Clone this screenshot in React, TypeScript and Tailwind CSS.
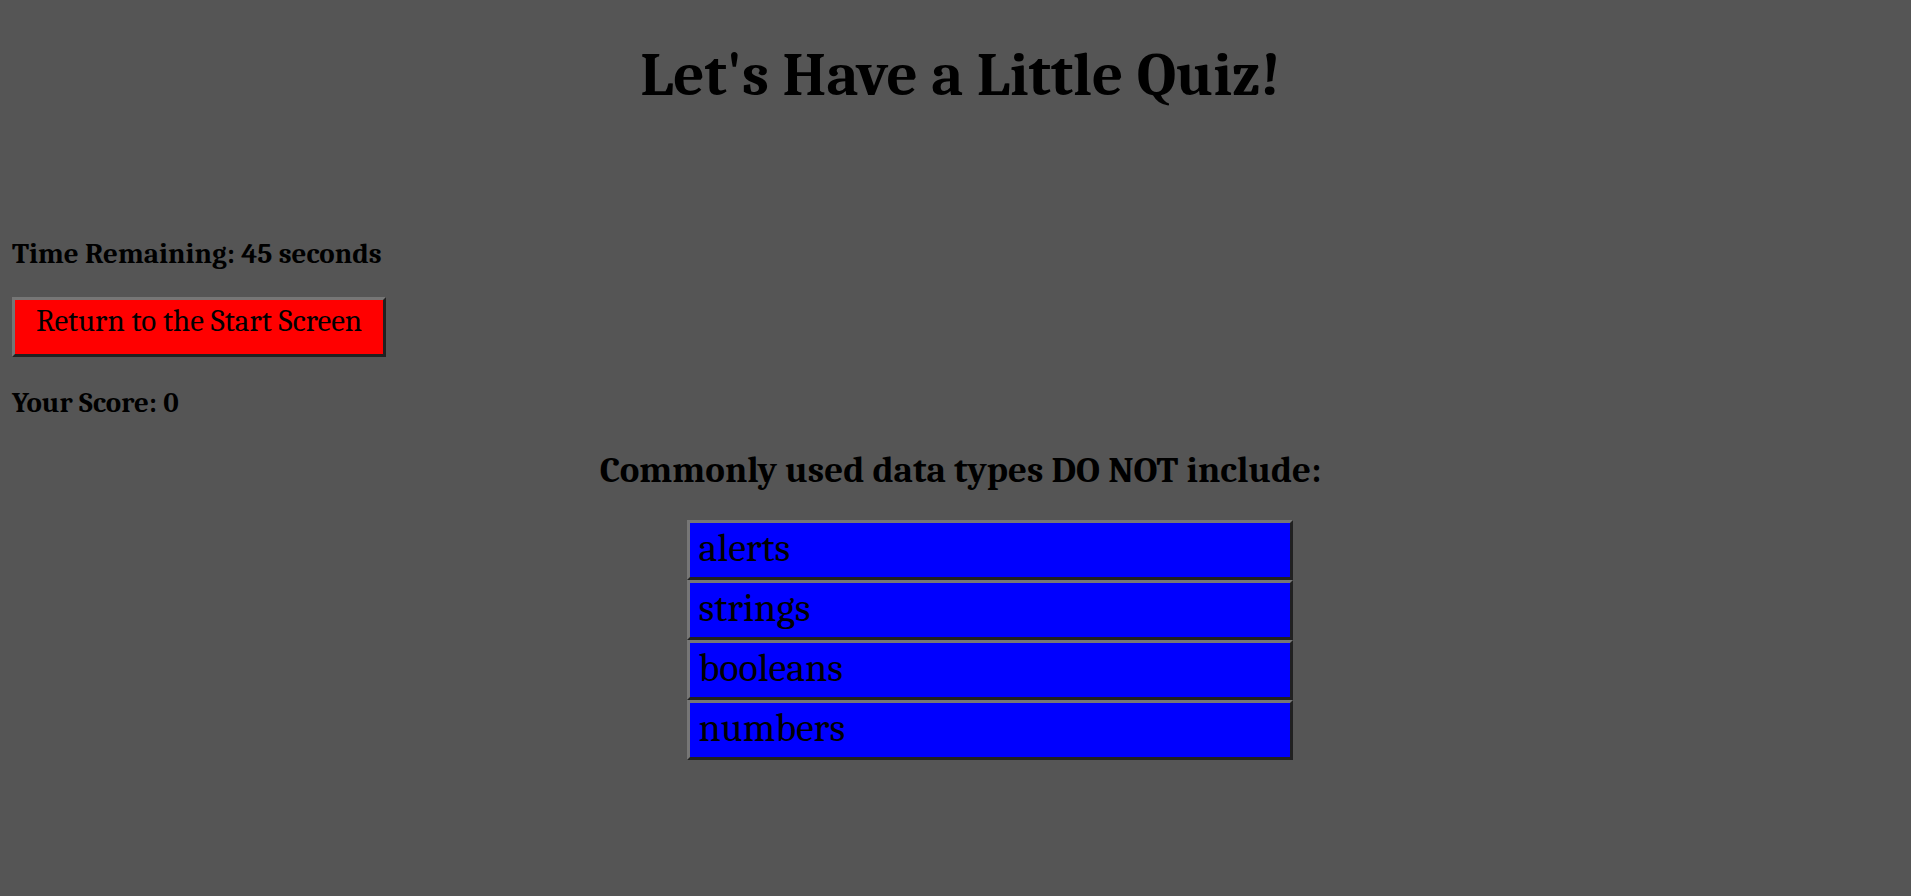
import { useState } from "react";

const answers = ["alerts", "strings", "booleans", "numbers"];

const raised =
  "border-[3px] border-t-[#767676] border-l-[#767676] border-r-[#212121] border-b-[#212121]";

export default function App() {
  const [score, setScore] = useState(0);

  return (
    <main className="flex min-h-screen flex-col bg-[#555555] pl-3 font-['Cambria','Caladea','Liberation_Serif',serif] text-black">
      <h1 className="pt-[39px] pr-0.5 text-center text-[61px] leading-[72px] font-bold">
        Let's Have a Little Quiz!
      </h1>

      <section className="mt-[125px] flex flex-col items-start">
        <h3 className="text-[29px] leading-9 font-bold">Time Remaining: 45 seconds</h3>
        <button
          type="button"
          onClick={() => setScore(0)}
          className={`mt-[25px] h-[60px] bg-[#ff0000] px-[21px] pb-3 text-[31px] leading-9 ${raised}`}
        >
          Return to the Start Screen
        </button>
        <h3 className="mt-7 text-[29px] leading-9 font-bold">Your Score: {score}</h3>
      </section>

      <section className="mt-[29px] pr-0.5">
        <h2 className="text-center text-[37px] leading-10 font-bold">
          Commonly used data types DO NOT include:
        </h2>
        <ul className="mt-[30px] flex flex-col items-center pl-[58px]">
          {answers.map((answer) => (
            <li key={answer} className="flex w-[606px] max-w-full">
              <button
                type="button"
                onClick={() => setScore(answer === "alerts" ? score + 1 : score)}
                className={`h-[60px] w-full bg-[#0000ff] pb-1 pl-[9px] text-left text-[40px] leading-[46px] ${raised}`}
              >
                {answer}
              </button>
            </li>
          ))}
        </ul>
      </section>
    </main>
  );
}
